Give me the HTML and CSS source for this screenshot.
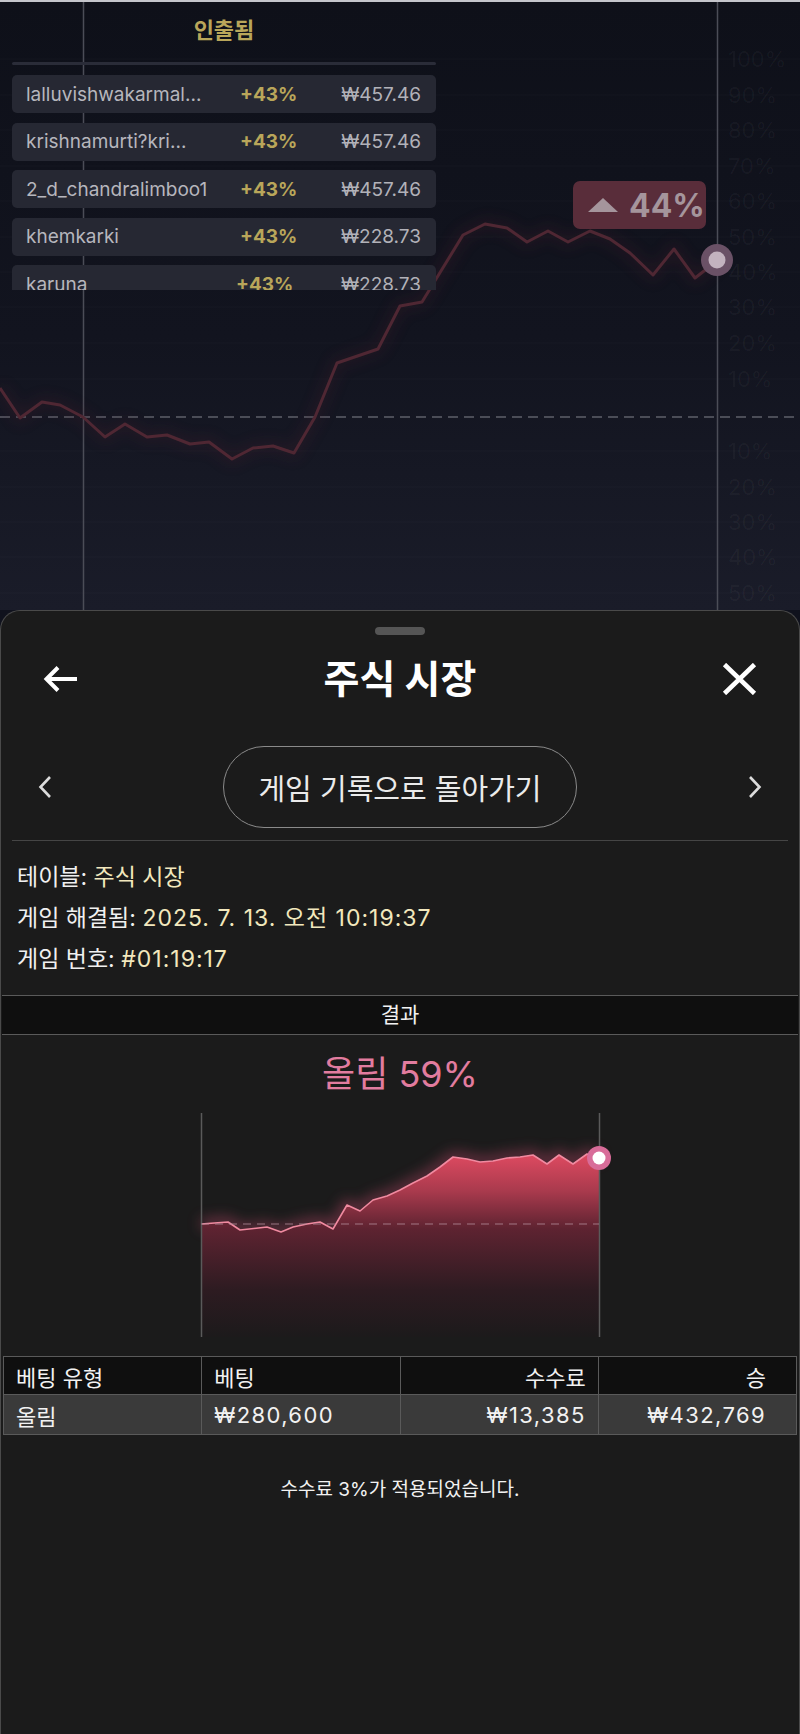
FILE: index.html
```html
<!DOCTYPE html>
<html lang="ko">
<head>
<meta charset="utf-8">
<title>주식 시장</title>
<link rel="stylesheet" href="styles.css">
</head>
<body>
<div class="topbar"></div>
<div class="stage">
  <svg class="stage-chart" viewBox="0 2 800 608" width="800" height="608" aria-hidden="true">
    <defs>
      <filter id="glowA" x="-20%" y="-50%" width="140%" height="200%"><feGaussianBlur stdDeviation="7"/></filter>
    </defs>
    <g class="grid">
      <line x1="0" y1="59" x2="800" y2="59"/><line x1="0" y1="95" x2="800" y2="95"/>
      <line x1="0" y1="130" x2="800" y2="130"/><line x1="0" y1="166" x2="800" y2="166"/>
      <line x1="0" y1="201" x2="800" y2="201"/><line x1="0" y1="237" x2="800" y2="237"/>
      <line x1="0" y1="272" x2="800" y2="272"/><line x1="0" y1="307" x2="800" y2="307"/>
      <line x1="0" y1="343" x2="800" y2="343"/><line x1="0" y1="379" x2="800" y2="379"/>
      <line x1="0" y1="451" x2="800" y2="451"/><line x1="0" y1="487" x2="800" y2="487"/>
      <line x1="0" y1="522" x2="800" y2="522"/><line x1="0" y1="557" x2="800" y2="557"/>
      <line x1="0" y1="593" x2="800" y2="593"/>
    </g>
    <g class="axis">
      <text x="728" y="67">100%</text><text x="728" y="103">90%</text>
      <text x="728" y="138">80%</text><text x="728" y="174">70%</text>
      <text x="728" y="209">60%</text><text x="728" y="245">50%</text>
      <text x="728" y="280">40%</text><text x="728" y="315">30%</text>
      <text x="728" y="351">20%</text><text x="728" y="387">10%</text>
      <text x="728" y="459">10%</text><text x="728" y="495">20%</text>
      <text x="728" y="530">30%</text><text x="728" y="565">40%</text>
      <text x="728" y="601">50%</text>
    </g>
    <line class="vline" x1="83.5" y1="0" x2="83.5" y2="610"/>
    <line class="vline" x1="717.5" y1="0" x2="717.5" y2="610"/>
    <line class="baseline" x1="0" y1="417" x2="800" y2="417"/>
    <polyline class="trend-glow" filter="url(#glowA)" points="0,388 20,418 42,402 60,405 83,417 105,437 125,424 147,437 167,435 190,444 209,442 232,459 253,448 273,446 294,453 315,417 337,363 378,349 400,306 422,302 463,235 485,224 507,228 527,242 548,231 568,242 590,231 610,239 630,253 653,275 674,249 695,278 717,261"/>
    <polyline class="trend" points="0,388 20,418 42,402 60,405 83,417 105,437 125,424 147,437 167,435 190,444 209,442 232,459 253,448 273,446 294,453 315,417 337,363 378,349 400,306 422,302 463,235 485,224 507,228 527,242 548,231 568,242 590,231 610,239 630,253 653,275 674,249 695,278 717,261"/>
    <circle cx="717" cy="260" r="16" class="dot-outer"/>
    <circle cx="717" cy="260" r="8.5" class="dot-inner"/>
  </svg>

  <div class="cashout">
    <h2 class="cashout-title">인출됨</h2>
    <div class="cashout-divider"></div>
    <div class="cashout-rows">
      <div class="cash-row"><span class="cash-name">lalluvishwakarmal...</span><span class="cash-pct">+43%</span><span class="cash-amt">₩457.46</span></div>
      <div class="cash-row"><span class="cash-name">krishnamurti?kri...</span><span class="cash-pct">+43%</span><span class="cash-amt">₩457.46</span></div>
      <div class="cash-row"><span class="cash-name">2_d_chandralimboo1</span><span class="cash-pct">+43%</span><span class="cash-amt">₩457.46</span></div>
      <div class="cash-row"><span class="cash-name">khemkarki</span><span class="cash-pct">+43%</span><span class="cash-amt">₩228.73</span></div>
      <div class="cash-row"><span class="cash-name">karuna</span><span class="cash-pct cash-pct-shift">+43%</span><span class="cash-amt">₩228.73</span></div>
    </div>
  </div>

  <div class="badge"><span class="badge-tri"></span><span>44%</span></div>
</div>

<section class="sheet">
  <div class="handle"></div>
  <header class="sheet-header">
    <svg class="icon-back" width="36" height="28" viewBox="0 0 36 28" aria-hidden="true">
      <path d="M34 14H4M15 2.5L3.5 14 15 25.5" fill="none" stroke="#fff" stroke-width="4" stroke-linejoin="miter"/>
    </svg>
    <h1 class="sheet-title">주식 시장</h1>
    <svg class="icon-close" width="35" height="32" viewBox="0 0 35 32" aria-hidden="true">
      <path d="M2.5 1.5L32.5 30.5M32.5 1.5L2.5 30.5" fill="none" stroke="#fff" stroke-width="4.6"/>
    </svg>
  </header>

  <div class="pager">
    <svg width="16" height="24" viewBox="0 0 16 24" aria-hidden="true"><path d="M13 2L3.5 12 13 22" fill="none" stroke="#dcdcdc" stroke-width="2.6"/></svg>
    <button class="pill">게임 기록으로 돌아가기</button>
    <svg width="16" height="24" viewBox="0 0 16 24" aria-hidden="true"><path d="M3 2L12.5 12 3 22" fill="none" stroke="#dcdcdc" stroke-width="2.6"/></svg>
  </div>
  <div class="rule"></div>

  <div class="info">
    <div>테이블: <span class="info-val">주식 시장</span></div>
    <div>게임 해결됨: <span class="info-val info-num">2025. 7. 13. 오전 10:19:37</span></div>
    <div>게임 번호: <span class="info-val info-num">#01:19:17</span></div>
  </div>

  <div class="result-bar">결과</div>
  <div class="outcome">올림 59%</div>

  <svg class="result-chart" viewBox="1 1100 798 245" width="798" height="245" aria-hidden="true">
    <defs>
      <linearGradient id="areaFill" gradientUnits="userSpaceOnUse" x1="0" y1="1150" x2="0" y2="1337">
        <stop offset="0" stop-color="#e44c63"/>
        <stop offset="0.22" stop-color="#a93a4d"/>
        <stop offset="0.42" stop-color="#5e2331"/>
        <stop offset="0.75" stop-color="#2d1b21"/>
        <stop offset="1" stop-color="#1c1a1b"/>
      </linearGradient>
      <filter id="glowB" x="-20%" y="-60%" width="140%" height="220%"><feGaussianBlur stdDeviation="7"/></filter>
    </defs>
    <polyline class="area-glow" filter="url(#glowB)" points="201,1224 228,1222 240,1230 267,1227 281,1232 293,1227 307,1224 320,1222 333,1229 347,1205 360,1211 373,1200 387,1196 400,1190 413,1183 427,1176 440,1167 453,1157 467,1159 480,1162 493,1161 507,1158 520,1157 533,1155 547,1164 559,1155 573,1164 587,1154 599,1158"/>
    <polygon fill="url(#areaFill)" points="201,1224 228,1222 240,1230 267,1227 281,1232 293,1227 307,1224 320,1222 333,1229 347,1205 360,1211 373,1200 387,1196 400,1190 413,1183 427,1176 440,1167 453,1157 467,1159 480,1162 493,1161 507,1158 520,1157 533,1155 547,1164 559,1155 573,1164 587,1154 599,1158 599,1337 201,1337"/>
    <polyline class="area-line" points="201,1224 228,1222 240,1230 267,1227 281,1232 293,1227 307,1224 320,1222 333,1229 347,1205 360,1211 373,1200 387,1196 400,1190 413,1183 427,1176 440,1167 453,1157 467,1159 480,1162 493,1161 507,1158 520,1157 533,1155 547,1164 559,1155 573,1164 587,1154 599,1158"/>
    <line class="chart-v" x1="201.5" y1="1113" x2="201.5" y2="1337"/>
    <line class="chart-v" x1="599.5" y1="1113" x2="599.5" y2="1337"/>
    <line class="chart-base" x1="201" y1="1224" x2="599" y2="1224"/>
    <circle cx="599" cy="1158" r="12" fill="#d86c99"/>
    <circle cx="599" cy="1158" r="6.5" fill="#ffffff"/>
  </svg>

  <table class="bets">
    <thead>
      <tr><th>베팅 유형</th><th>베팅</th><th class="num">수수료</th><th class="num last">승</th></tr>
    </thead>
    <tbody>
      <tr><td>올림</td><td class="money">₩280,600</td><td class="num money">₩13,385</td><td class="num last money">₩432,769</td></tr>
    </tbody>
  </table>

  <p class="note">수수료 3%가 적용되었습니다.</p>
</section>
</body>
</html>
```

FILE: styles.css
```css
html, body {
  margin: 0;
  padding: 0;
  background: #10121d;
}

body {
  width: 800px;
  font-family: Inter, "Noto Sans CJK KR", sans-serif;
}

.topbar {
  height: 2px;
  background: #c4c5cb;
}

.stage {
  position: relative;
  height: 608px;
  overflow: hidden;
  background: linear-gradient(180deg, #0e1019 0%, #12141f 55%, #1a1c29 100%);
}

.stage-chart {
  position: absolute;
  left: 0;
  top: 0;
}

.grid line {
  stroke: rgba(255, 255, 255, 0.022);
  stroke-width: 1;
}

.axis text {
  font-family: Inter, sans-serif;
  font-size: 22px;
  fill: rgba(255, 255, 255, 0.04);
}

.vline {
  stroke: #4b4d57;
  stroke-width: 1.5;
}

.baseline {
  stroke: #5e606a;
  stroke-width: 1.5;
  stroke-dasharray: 10 6;
}

.trend {
  fill: none;
  stroke: #4f2733;
  stroke-width: 3;
  stroke-linejoin: round;
}

.trend-glow {
  fill: none;
  stroke: #4a1f2c;
  stroke-width: 10;
  opacity: 0.3;
}

.dot-outer {
  fill: #6a5166;
}

.dot-inner {
  fill: #c3b3bf;
}

.cashout {
  position: relative;
  width: 424px;
  margin-left: 12px;
}

.cashout-title {
  margin: 0;
  padding-top: 13px;
  line-height: 30px;
  text-align: center;
  font-size: 22px;
  font-weight: 700;
  color: #b9a65a;
}

.cashout-divider {
  margin-top: 17px;
  height: 3px;
  border-radius: 2px;
  background: #2a2c38;
}

.cashout-rows {
  margin-top: 10px;
  height: 215px;
  overflow: hidden;
  display: flex;
  flex-direction: column;
  gap: 9.5px;
}

.cash-row {
  flex: 0 0 38px;
  display: grid;
  grid-template-columns: 214px 1fr auto;
  align-items: center;
  padding: 0 15px 0 14px;
  border-radius: 5px;
  background: #262833;
  font-size: 19px;
  color: #b6b6bd;
  white-space: nowrap;
}

.cash-pct {
  font-weight: 700;
  color: #b9a65a;
}

.cash-pct-shift {
  margin-left: -4px;
}

.cash-amt {
  color: #b2b2b9;
}

.badge {
  position: absolute;
  left: 573px;
  top: 179px;
  width: 133px;
  height: 48px;
  box-sizing: border-box;
  padding-left: 15px;
  display: flex;
  align-items: center;
  gap: 11px;
  border-radius: 7px;
  background: #592d3a;
  color: #a5959c;
  font-size: 32px;
  font-weight: 700;
}

.badge-tri {
  width: 0;
  height: 0;
  border-left: 15px solid transparent;
  border-right: 15px solid transparent;
  border-bottom: 14px solid #a5959c;
}

.sheet {
  box-sizing: border-box;
  min-height: 1124px;
  background: #1b1b1b;
  border: 1px solid #4a4a4a;
  border-bottom: none;
  border-radius: 20px 20px 0 0;
  color: #f0f0f0;
  overflow: hidden;
}

.handle {
  width: 50px;
  height: 8px;
  margin: 16px auto 0;
  border-radius: 4px;
  background: #555555;
}

.sheet-header {
  height: 88px;
  display: grid;
  grid-template-columns: 1fr auto 1fr;
  align-items: center;
  padding: 0 42px 0 42px;
}

.icon-back {
  justify-self: start;
}

.icon-close {
  justify-self: end;
}

.sheet-title {
  margin: 0;
  font-size: 39px;
  font-weight: 700;
  line-height: 46px;
  color: #ffffff;
}

.pager {
  margin-top: 23px;
  padding: 0 36px;
  display: flex;
  align-items: center;
  justify-content: space-between;
}

.pill {
  width: 354px;
  height: 82px;
  box-sizing: border-box;
  border: 1.5px solid #8a8a8a;
  border-radius: 41px;
  background: transparent;
  color: #ebebeb;
  font-family: Inter, "Noto Sans CJK KR", sans-serif;
  font-size: 29px;
  padding: 0;
}

.rule {
  height: 1px;
  margin: 12px 11px 0;
  background: #454545;
}

.info {
  padding: 16px 16px 0;
  font-size: 23px;
  line-height: 41px;
  color: #f0f0f0;
}

.info-val {
  color: #f2e8bd;
}

.info-num {
  letter-spacing: 1px;
}

.result-bar {
  margin: 15px 1px 0;
  height: 40px;
  box-sizing: border-box;
  border-top: 1px solid #5a5a5a;
  border-bottom: 1px solid #5a5a5a;
  background: #0f0f0f;
  text-align: center;
  line-height: 38px;
  font-size: 21px;
  color: #f2f2f2;
}

.outcome {
  margin-top: 17px;
  text-align: center;
  font-size: 36px;
  line-height: 44px;
  color: #e27c9f;
}

.result-chart {
  display: block;
  margin-top: 4px;
}

.area-glow {
  fill: none;
  stroke: #c24a6c;
  stroke-width: 9;
  opacity: 0.55;
}

.area-line {
  fill: none;
  stroke: #f08aa0;
  stroke-width: 1.6;
  stroke-linejoin: round;
}

.chart-v {
  stroke: #5a5a5a;
  stroke-width: 1.5;
}

.chart-base {
  stroke: #b08a98;
  stroke-width: 1.2;
  stroke-dasharray: 8 6;
  opacity: 0.8;
}

.bets {
  width: 794px;
  margin: 11px 2px 0;
  border-collapse: collapse;
  table-layout: fixed;
  font-size: 22px;
  color: #f2f2f2;
}

.bets th,
.bets td {
  border: 1px solid #5a5a5a;
  padding: 0 12px;
  text-align: left;
  font-weight: 400;
  white-space: nowrap;
}

.bets th {
  height: 37px;
  background: #0f0f0f;
}

.bets td {
  height: 39px;
  background: #3a3a3a;
}

.bets .money {
  letter-spacing: 1.4px;
}

.bets .num {
  text-align: right;
}

.bets .last {
  padding-right: 30px;
}

.note {
  margin: 43px 0 0;
  text-align: center;
  font-size: 19px;
  line-height: 24px;
  color: #f2f2f2;
}
```
